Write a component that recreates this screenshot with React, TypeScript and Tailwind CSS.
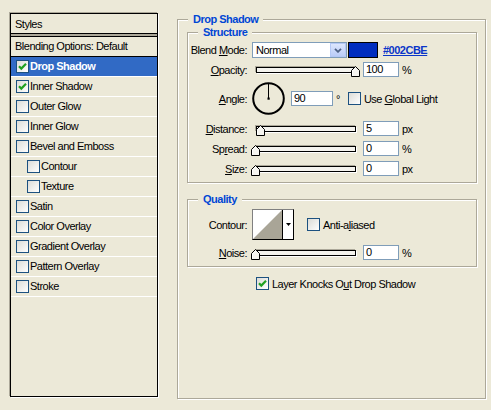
import React from 'react';

type Item = { name: string; on?: boolean; active?: boolean; sub?: boolean };

const styles: Item[] = [
  { name: 'Drop Shadow', on: true, active: true },
  { name: 'Inner Shadow', on: true },
  { name: 'Outer Glow' },
  { name: 'Inner Glow' },
  { name: 'Bevel and Emboss' },
  { name: 'Contour', sub: true },
  { name: 'Texture', sub: true },
  { name: 'Satin' },
  { name: 'Color Overlay' },
  { name: 'Gradient Overlay' },
  { name: 'Pattern Overlay' },
  { name: 'Stroke' },
];

function Check({ checked = false }: { checked?: boolean }) {
  return (
    <span className="flex h-[13px] w-[13px] shrink-0 items-center justify-center border border-[#1C5180] bg-linear-to-br from-[#DCDCD7] to-white">
      {checked && (
        <svg width="11" height="11" viewBox="0 0 11 11">
          <path d="M2 5.2 L4.3 7.6 L9 2.8" fill="none" stroke="#21A121" strokeWidth="2.2" />
        </svg>
      )}
    </span>
  );
}

function U({ children }: { children: React.ReactNode }) {
  return <span className="underline">{children}</span>;
}

function Label({ children }: { children: React.ReactNode }) {
  return <span className="w-[59px] shrink-0 text-right">{children}</span>;
}

function Legend({ children }: { children: React.ReactNode }) {
  return (
    <span className="-mt-[8px] ml-[10px] self-start bg-[#ECE9D8] px-[5px] font-bold leading-[14px] text-[#0046D5]">
      {children}
    </span>
  );
}

function Slider({ value }: { value: number }) {
  return (
    <div className="relative ml-[5px] h-[15px] w-[107px] shrink-0">
      <div className="ml-[4px] mt-[5px] h-[6px] w-[100px] border border-black bg-[#F4F3EE] shadow-[-1px_-1px_0_#ACA899,1px_1px_0_#fff]" />
      <svg className="absolute top-[4px]" style={{ left: value - 1 }} width="9" height="11" viewBox="0 0 9 11">
        <polygon points="0.5,4.5 4.5,0.5 8.5,4.5 8.5,10.5 0.5,10.5" fill="#F6F5F0" stroke="#000" strokeWidth="1" />
        <polyline points="1.5,9.5 1.5,5 4.5,2" fill="none" stroke="#fff" strokeWidth="1" />
      </svg>
    </div>
  );
}

function Field({ value, w = 'w-[36px]' }: { value: string; w?: string }) {
  return (
    <span className={`ml-[4px] flex h-[15px] shrink-0 items-center border border-[#7F9DB9] bg-white pl-[2px] leading-[13px] ${w}`}>
      {value}
    </span>
  );
}

function LeftPanel() {
  return (
    <div className="ml-[10px] mt-[13px] flex h-[384px] w-[148px] shrink-0 flex-col border border-black shadow-[-1px_-1px_0_#ACA899,1px_1px_0_#fff]">
      <div className="flex h-[19px] items-center pl-[4px]">Styles</div>
      <div className="h-[4px] border-y border-black bg-[#ACA899]" />
      <div className="flex h-[20px] items-center border-b border-black pb-[1px] pl-[4px]">Blending Options: Default</div>
      {styles.map((s) => (
        <div
          key={s.name}
          className={`flex h-[20px] items-center border-b border-white pb-[1px] ${s.sub ? 'pl-[16px]' : 'pl-[5px]'} ${
            s.active ? 'bg-[#316AC5] font-bold text-white' : ''
          }`}
        >
          <Check checked={s.on} />
          <span className="ml-[1px]">{s.name}</span>
        </div>
      ))}
    </div>
  );
}

function RightPanel() {
  return (
    <div className="ml-[19px] mt-[19px] flex h-[380px] w-[309px] shrink-0 flex-col border border-[#ACA899] shadow-[inset_1px_1px_0_#fff,1px_1px_0_#fff]">
      <Legend>Drop Shadow</Legend>

      {/* Structure */}
      <div className="ml-[9px] mt-[6px] flex h-[151px] w-[290px] flex-col border border-[#ACA899] shadow-[inset_1px_1px_0_#fff,1px_1px_0_#fff]">
        <Legend>Structure</Legend>

        <div className="mt-[3px] flex h-[16px] items-center">
          <Label>
            Blend <U>M</U>ode:
          </Label>
          <div className="ml-[5px] flex h-[16px] w-[95px] items-center border border-[#7F9DB9] bg-white">
            <span className="flex-1 pl-[3px]">Normal</span>
            <span className="flex h-[14px] w-[16px] items-center justify-center border border-[#B4C8F6] bg-linear-to-b from-[#DCE6FD] to-[#BACCF8]">
              <svg width="8" height="5" viewBox="0 0 8 5">
                <path d="M1 0.8 L4 3.8 L7 0.8" fill="none" stroke="#4D6185" strokeWidth="1.8" />
              </svg>
            </span>
          </div>
          <span className="ml-[1px] h-[16px] w-[30px] border border-black bg-[#002CBE]" />
          <span className="ml-[5px] font-bold text-[#0A35C8] underline">#002CBE</span>
        </div>

        <div className="mt-[4px] flex h-[15px] items-center">
          <Label>
            <U>O</U>pacity:
          </Label>
          <Slider value={100} />
          <Field value="100" />
          <span className="ml-[3px]">%</span>
        </div>

        <div className="mt-[5px] flex h-[33px] items-center">
          <Label>
            <U>A</U>ngle:
          </Label>
          <svg className="ml-[5px] shrink-0" width="33" height="33" viewBox="0 0 33 33">
            <circle cx="16.5" cy="16.5" r="15.3" fill="none" stroke="#000" strokeWidth="2" />
            <line x1="16.5" y1="16.5" x2="16.5" y2="1.5" stroke="#000" strokeWidth="1" />
            <rect x="15.5" y="15.5" width="2.2" height="2.2" fill="#000" />
          </svg>
          <Field value="90" w="w-[42px] ml-[6px]" />
          <span className="ml-[3px]">°</span>
          <span className="ml-[8px]">
            <Check />
          </span>
          <span className="ml-[3px]">
            Use <U>G</U>lobal Light
          </span>
        </div>

        <div className="mt-[6px] flex h-[15px] items-center">
          <Label>
            <U>D</U>istance:
          </Label>
          <Slider value={5} />
          <Field value="5" />
          <span className="ml-[3px]">px</span>
        </div>

        <div className="mt-[5px] flex h-[15px] items-center">
          <Label>
            Sp<U>r</U>ead:
          </Label>
          <Slider value={0} />
          <Field value="0" />
          <span className="ml-[3px]">%</span>
        </div>

        <div className="mt-[5px] flex h-[15px] items-center">
          <Label>
            <U>S</U>ize:
          </Label>
          <Slider value={0} />
          <Field value="0" />
          <span className="ml-[3px]">px</span>
        </div>
      </div>

      {/* Quality */}
      <div className="ml-[9px] mt-[16px] flex h-[68px] w-[290px] flex-col border border-[#ACA899] shadow-[inset_1px_1px_0_#fff,1px_1px_0_#fff]">
        <Legend>Quality</Legend>

        <div className="mt-[3px] flex h-[31px] items-center">
          <Label>Contour:</Label>
          <div className="ml-[5px] flex h-[31px] w-[42px] border border-black border-l-[#808080] border-t-[#808080] bg-white">
            <svg width="29" height="29" viewBox="0 0 29 29">
              <polygon points="0,29 29,0 29,29" fill="#A9A597" />
            </svg>
            <div className="flex w-[11px] items-center justify-center border-l border-black">
              <svg width="5" height="3" viewBox="0 0 5 3">
                <polygon points="0,0 5,0 2.5,3" fill="#000" />
              </svg>
            </div>
          </div>
          <span className="ml-[13px]">
            <Check />
          </span>
          <span className="ml-[3px]">
            Anti-a<U>l</U>iased
          </span>
        </div>

        <div className="mt-[5px] flex h-[15px] items-center">
          <Label>
            <U>N</U>oise:
          </Label>
          <Slider value={0} />
          <Field value="0" />
          <span className="ml-[3px]">%</span>
        </div>
      </div>

      <div className="ml-[78px] mt-[10px] flex h-[13px] items-center">
        <Check checked />
        <span className="ml-[3px]">
          Layer Knocks O<U>u</U>t Drop Shadow
        </span>
      </div>
    </div>
  );
}

export default function App() {
  return (
    <div className="flex h-[410px] w-[491px] items-start bg-[#ECE9D8] font-['Liberation_Sans',Arial,sans-serif] text-[11px] leading-[14px] tracking-[-0.5px] text-black">
      <LeftPanel />
      <RightPanel />
    </div>
  );
}
